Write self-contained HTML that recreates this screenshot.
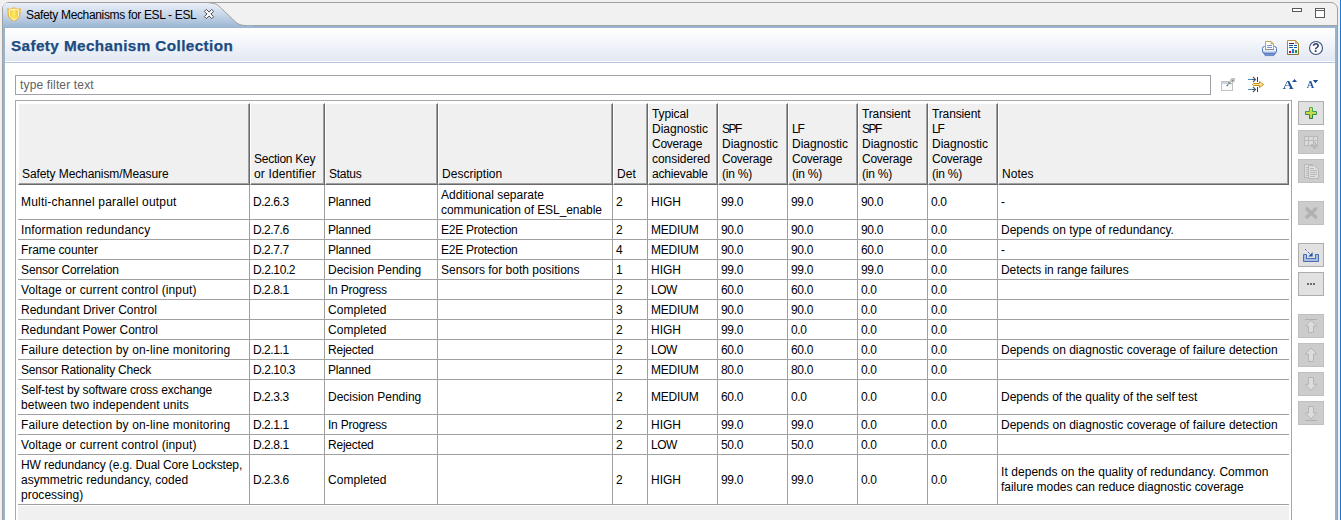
<!DOCTYPE html>
<html><head><meta charset="utf-8"><title>Safety Mechanisms for ESL - ESL</title>
<style>
html,body{margin:0;padding:0}
body{width:1341px;height:520px;overflow:hidden;background:#f0f0f0;position:relative;font-family:"Liberation Sans",sans-serif;font-size:12px;line-height:15px;color:#000}
div,svg,span{box-sizing:border-box}
.abs,.hc,.c,.rl,.cl,.empty,.btn,.ic{position:absolute}
#frame{position:absolute;left:2px;top:2px;width:1336px;height:540px;border:1px solid #a0a0a0;border-radius:7px 7px 0 0;background:#f1f1f1}
#edge{position:absolute;left:1340px;top:0;width:1px;height:520px;background:#1979d6}
#blueL{left:3px;top:26px;width:2px;height:500px;background:#99b4d1}
#blueR{left:1335px;top:26px;width:2px;height:500px;background:#99b4d1}
#blueT{left:3px;top:26px;width:1334px;height:2px;background:#99b4d1}
#grayT{left:240px;top:25px;width:1097px;height:1px;background:#a0a0a0}
#white{left:5px;top:28px;width:1330px;height:500px;background:#fff}
#band{left:5px;top:28px;width:1330px;height:33px;background:linear-gradient(#ffffff 0%,#fdfdfe 12%,#e2e8f3 100%)}
#bandl{left:5px;top:62px;width:1330px;height:1px;background:#b3c6e0}
#title{left:11px;top:36.2px;font-size:15.3px;font-weight:bold;color:#1c4b80;line-height:20px;white-space:nowrap;letter-spacing:0.39px;-webkit-text-stroke:0.25px #1c4b80}
#tabtxt{left:26px;top:8px;white-space:nowrap;line-height:15px}
#filter{left:15px;top:75px;width:1196px;height:20px;border:1px solid #a0a1a9;background:#fff}
#ftxt{left:20px;top:78px;color:#626262;white-space:nowrap}
#tbl{left:15px;top:100px;width:1277px;height:440px;border:1px solid #a6a7af;background:#fff}
.hc{top:103px;height:82px;background:#f0f0f0;border-left:1px solid #fff;border-top:1px solid #fff;border-right:1px solid #696969;border-bottom:1px solid #696969;box-shadow:inset -1px -1px 0 #a0a0a0}
.ht{position:absolute;left:3px;bottom:2px;white-space:nowrap}
.c{white-space:nowrap}
.rl{left:18px;width:1271px;height:1px;background:#a0a0a0}
.cl{width:1px;background:#a0a0a0}
.empty{left:18px;width:1271px;height:40px;background:#f0f0f0}
.btn{left:1298px;width:26px;height:24px;border:1px solid #adadad;background:#e1e1e1}
.btn.dis{border-color:#bfbfbf;background:#cccccc}
</style></head><body>
<div id="frame"></div>
<div id="edge"></div>
<div class="abs" id="grayT"></div>
<div class="abs" id="blueT"></div>
<div class="abs" id="blueL"></div>
<div class="abs" id="blueR"></div>
<div class="abs" id="white"></div>
<div class="abs" id="band"></div>
<div class="abs" id="bandl"></div>
<svg class="abs" id="tab" style="left:3px;top:3px" width="250" height="25" viewBox="0 0 250 25">
<defs><linearGradient id="tg" x1="0" y1="0" x2="0" y2="1"><stop offset="0" stop-color="#ebf0f8"/><stop offset="0.45" stop-color="#c9d7ea"/><stop offset="1" stop-color="#99b4d1"/></linearGradient></defs>
<path d="M0,25 L0,5 Q0,0 5,0 L206.5,0 C214,0 216,3 220,7 L229.3,15.8 C233,19.5 235.5,22.5 243,22.5 L250,22.5 L250,25 Z" fill="url(#tg)"/>
<path d="M206.5,0 C214,0 216,3 220,7 L229.3,15.8 C233,19.5 235.5,22.5 243,22.5" fill="none" stroke="#a0a0a0" stroke-width="1"/>
</svg>
<div class="abs" id="tabtxt"><span style="letter-spacing:-0.34px">Safety Mechanisms for ESL - ESL</span></div>
<div class="abs" id="title">Safety Mechanism Collection</div>
<div class="abs" id="filter"></div>
<div class="abs" id="ftxt"><span style="letter-spacing:0.15px">type filter text</span></div>
<div class="abs" id="tbl"></div>

<div class="hc" style="left:18px;width:232px"><div class="ht"><span style="letter-spacing:-0.09px">Safety Mechanism/Measure</span></div></div>
<div class="hc" style="left:250px;width:75px"><div class="ht"><span style="letter-spacing:-0.25px">Section Key</span><br><span style="letter-spacing:0.14px">or Identifier</span></div></div>
<div class="hc" style="left:325px;width:113px"><div class="ht"><span style="letter-spacing:-0.26px">Status</span></div></div>
<div class="hc" style="left:438px;width:175px"><div class="ht"><span style="letter-spacing:0.02px">Description</span></div></div>
<div class="hc" style="left:613px;width:35px"><div class="ht"><span style="letter-spacing:0.02px">Det</span></div></div>
<div class="hc" style="left:648px;width:70px"><div class="ht"><span style="letter-spacing:-0.11px">Typical</span><br><span style="letter-spacing:-0.01px">Diagnostic</span><br><span style="letter-spacing:-0.24px">Coverage</span><br><span style="letter-spacing:-0.05px">considered</span><br><span style="letter-spacing:-0.17px">achievable</span></div></div>
<div class="hc" style="left:718px;width:70px"><div class="ht"><span style="letter-spacing:-1.47px">SPF</span><br><span style="letter-spacing:-0.01px">Diagnostic</span><br><span style="letter-spacing:-0.24px">Coverage</span><br><span style="letter-spacing:-0.22px">(in %)</span></div></div>
<div class="hc" style="left:788px;width:70px"><div class="ht"><span style="letter-spacing:-1.26px">LF</span><br><span style="letter-spacing:-0.01px">Diagnostic</span><br><span style="letter-spacing:-0.24px">Coverage</span><br><span style="letter-spacing:-0.22px">(in %)</span></div></div>
<div class="hc" style="left:858px;width:70px"><div class="ht"><span style="letter-spacing:-0.13px">Transient</span><br><span style="letter-spacing:-1.47px">SPF</span><br><span style="letter-spacing:-0.01px">Diagnostic</span><br><span style="letter-spacing:-0.24px">Coverage</span><br><span style="letter-spacing:-0.22px">(in %)</span></div></div>
<div class="hc" style="left:928px;width:70px"><div class="ht"><span style="letter-spacing:-0.13px">Transient</span><br><span style="letter-spacing:-1.26px">LF</span><br><span style="letter-spacing:-0.01px">Diagnostic</span><br><span style="letter-spacing:-0.24px">Coverage</span><br><span style="letter-spacing:-0.22px">(in %)</span></div></div>
<div class="hc" style="left:998px;width:291px"><div class="ht"><span style="letter-spacing:0.02px">Notes</span></div></div>
<div class="c" style="left:21px;top:195px"><span style="letter-spacing:0.19px">Multi-channel parallel output</span></div>
<div class="c" style="left:253px;top:195px"><span style="letter-spacing:-0.44px">D.2.6.3</span></div>
<div class="c" style="left:328px;top:195px"><span style="letter-spacing:-0.2px">Planned</span></div>
<div class="c" style="left:441px;top:188px"><span style="letter-spacing:0.01px">Additional separate</span><br><span style="letter-spacing:-0.07px">communication of ESL_enable</span></div>
<div class="c" style="left:616px;top:195px"><span style="letter-spacing:-0.22px">2</span></div>
<div class="c" style="left:651px;top:195px"><span style="letter-spacing:-0.01px">HIGH</span></div>
<div class="c" style="left:721px;top:195px"><span style="letter-spacing:-0.34px">99.0</span></div>
<div class="c" style="left:791px;top:195px"><span style="letter-spacing:-0.34px">99.0</span></div>
<div class="c" style="left:861px;top:195px"><span style="letter-spacing:-0.34px">90.0</span></div>
<div class="c" style="left:931px;top:195px"><span style="letter-spacing:-0.38px">0.0</span></div>
<div class="c" style="left:1001px;top:195px"><span style="letter-spacing:0.8px">-</span></div>
<div class="rl" style="top:219px"></div>
<div class="c" style="left:21px;top:223px"><span style="letter-spacing:0.15px">Information redundancy</span></div>
<div class="c" style="left:253px;top:223px"><span style="letter-spacing:-0.44px">D.2.7.6</span></div>
<div class="c" style="left:328px;top:223px"><span style="letter-spacing:-0.2px">Planned</span></div>
<div class="c" style="left:441px;top:223px"><span style="letter-spacing:-0.25px">E2E Protection</span></div>
<div class="c" style="left:616px;top:223px"><span style="letter-spacing:-0.22px">2</span></div>
<div class="c" style="left:651px;top:223px"><span style="letter-spacing:-0.2px">MEDIUM</span></div>
<div class="c" style="left:721px;top:223px"><span style="letter-spacing:-0.34px">90.0</span></div>
<div class="c" style="left:791px;top:223px"><span style="letter-spacing:-0.34px">90.0</span></div>
<div class="c" style="left:861px;top:223px"><span style="letter-spacing:-0.34px">90.0</span></div>
<div class="c" style="left:931px;top:223px"><span style="letter-spacing:-0.38px">0.0</span></div>
<div class="c" style="left:1001px;top:223px"><span style="letter-spacing:0.01px">Depends on type of redundancy.</span></div>
<div class="rl" style="top:239px"></div>
<div class="c" style="left:21px;top:243px"><span style="letter-spacing:-0.09px">Frame counter</span></div>
<div class="c" style="left:253px;top:243px"><span style="letter-spacing:-0.44px">D.2.7.7</span></div>
<div class="c" style="left:328px;top:243px"><span style="letter-spacing:-0.2px">Planned</span></div>
<div class="c" style="left:441px;top:243px"><span style="letter-spacing:-0.25px">E2E Protection</span></div>
<div class="c" style="left:616px;top:243px"><span style="letter-spacing:-0.22px">4</span></div>
<div class="c" style="left:651px;top:243px"><span style="letter-spacing:-0.2px">MEDIUM</span></div>
<div class="c" style="left:721px;top:243px"><span style="letter-spacing:-0.34px">90.0</span></div>
<div class="c" style="left:791px;top:243px"><span style="letter-spacing:-0.34px">90.0</span></div>
<div class="c" style="left:861px;top:243px"><span style="letter-spacing:-0.34px">60.0</span></div>
<div class="c" style="left:931px;top:243px"><span style="letter-spacing:-0.38px">0.0</span></div>
<div class="c" style="left:1001px;top:243px"><span style="letter-spacing:0.8px">-</span></div>
<div class="rl" style="top:259px"></div>
<div class="c" style="left:21px;top:263px"><span style="letter-spacing:-0.12px">Sensor Correlation</span></div>
<div class="c" style="left:253px;top:263px"><span style="letter-spacing:-0.41px">D.2.10.2</span></div>
<div class="c" style="left:328px;top:263px"><span style="letter-spacing:-0.01px">Decision Pending</span></div>
<div class="c" style="left:441px;top:263px"><span style="letter-spacing:-0.01px">Sensors for both positions</span></div>
<div class="c" style="left:616px;top:263px"><span style="letter-spacing:-0.22px">1</span></div>
<div class="c" style="left:651px;top:263px"><span style="letter-spacing:-0.01px">HIGH</span></div>
<div class="c" style="left:721px;top:263px"><span style="letter-spacing:-0.34px">99.0</span></div>
<div class="c" style="left:791px;top:263px"><span style="letter-spacing:-0.34px">99.0</span></div>
<div class="c" style="left:861px;top:263px"><span style="letter-spacing:-0.34px">99.0</span></div>
<div class="c" style="left:931px;top:263px"><span style="letter-spacing:-0.38px">0.0</span></div>
<div class="c" style="left:1001px;top:263px"><span style="letter-spacing:-0.07px">Detects in range failures</span></div>
<div class="rl" style="top:279px"></div>
<div class="c" style="left:21px;top:283px"><span style="letter-spacing:0.12px">Voltage or current control (input)</span></div>
<div class="c" style="left:253px;top:283px"><span style="letter-spacing:-0.44px">D.2.8.1</span></div>
<div class="c" style="left:328px;top:283px"><span style="letter-spacing:-0.23px">In Progress</span></div>
<div class="c" style="left:616px;top:283px"><span style="letter-spacing:-0.22px">2</span></div>
<div class="c" style="left:651px;top:283px"><span style="letter-spacing:-0.48px">LOW</span></div>
<div class="c" style="left:721px;top:283px"><span style="letter-spacing:-0.34px">60.0</span></div>
<div class="c" style="left:791px;top:283px"><span style="letter-spacing:-0.34px">60.0</span></div>
<div class="c" style="left:861px;top:283px"><span style="letter-spacing:-0.38px">0.0</span></div>
<div class="c" style="left:931px;top:283px"><span style="letter-spacing:-0.38px">0.0</span></div>
<div class="rl" style="top:299px"></div>
<div class="c" style="left:21px;top:303px"><span style="letter-spacing:-0.01px">Redundant Driver Control</span></div>
<div class="c" style="left:328px;top:303px"><span style="letter-spacing:0.06px">Completed</span></div>
<div class="c" style="left:616px;top:303px"><span style="letter-spacing:-0.22px">3</span></div>
<div class="c" style="left:651px;top:303px"><span style="letter-spacing:-0.2px">MEDIUM</span></div>
<div class="c" style="left:721px;top:303px"><span style="letter-spacing:-0.34px">90.0</span></div>
<div class="c" style="left:791px;top:303px"><span style="letter-spacing:-0.34px">90.0</span></div>
<div class="c" style="left:861px;top:303px"><span style="letter-spacing:-0.38px">0.0</span></div>
<div class="c" style="left:931px;top:303px"><span style="letter-spacing:-0.38px">0.0</span></div>
<div class="rl" style="top:319px"></div>
<div class="c" style="left:21px;top:323px"><span style="letter-spacing:-0.05px">Redundant Power Control</span></div>
<div class="c" style="left:328px;top:323px"><span style="letter-spacing:0.06px">Completed</span></div>
<div class="c" style="left:616px;top:323px"><span style="letter-spacing:-0.22px">2</span></div>
<div class="c" style="left:651px;top:323px"><span style="letter-spacing:-0.01px">HIGH</span></div>
<div class="c" style="left:721px;top:323px"><span style="letter-spacing:-0.34px">99.0</span></div>
<div class="c" style="left:791px;top:323px"><span style="letter-spacing:-0.38px">0.0</span></div>
<div class="c" style="left:861px;top:323px"><span style="letter-spacing:-0.38px">0.0</span></div>
<div class="c" style="left:931px;top:323px"><span style="letter-spacing:-0.38px">0.0</span></div>
<div class="rl" style="top:339px"></div>
<div class="c" style="left:21px;top:343px"><span style="letter-spacing:0.15px">Failure detection by on-line monitoring</span></div>
<div class="c" style="left:253px;top:343px"><span style="letter-spacing:-0.44px">D.2.1.1</span></div>
<div class="c" style="left:328px;top:343px"><span style="letter-spacing:-0.23px">Rejected</span></div>
<div class="c" style="left:616px;top:343px"><span style="letter-spacing:-0.22px">2</span></div>
<div class="c" style="left:651px;top:343px"><span style="letter-spacing:-0.48px">LOW</span></div>
<div class="c" style="left:721px;top:343px"><span style="letter-spacing:-0.34px">60.0</span></div>
<div class="c" style="left:791px;top:343px"><span style="letter-spacing:-0.34px">60.0</span></div>
<div class="c" style="left:861px;top:343px"><span style="letter-spacing:-0.38px">0.0</span></div>
<div class="c" style="left:931px;top:343px"><span style="letter-spacing:-0.38px">0.0</span></div>
<div class="c" style="left:1001px;top:343px"><span style="letter-spacing:0.01px">Depends on diagnostic coverage of failure detection</span></div>
<div class="rl" style="top:359px"></div>
<div class="c" style="left:21px;top:363px"><span style="letter-spacing:-0.19px">Sensor Rationality Check</span></div>
<div class="c" style="left:253px;top:363px"><span style="letter-spacing:-0.41px">D.2.10.3</span></div>
<div class="c" style="left:328px;top:363px"><span style="letter-spacing:-0.2px">Planned</span></div>
<div class="c" style="left:616px;top:363px"><span style="letter-spacing:-0.22px">2</span></div>
<div class="c" style="left:651px;top:363px"><span style="letter-spacing:-0.2px">MEDIUM</span></div>
<div class="c" style="left:721px;top:363px"><span style="letter-spacing:-0.34px">80.0</span></div>
<div class="c" style="left:791px;top:363px"><span style="letter-spacing:-0.34px">80.0</span></div>
<div class="c" style="left:861px;top:363px"><span style="letter-spacing:-0.38px">0.0</span></div>
<div class="c" style="left:931px;top:363px"><span style="letter-spacing:-0.38px">0.0</span></div>
<div class="rl" style="top:379px"></div>
<div class="c" style="left:21px;top:383px"><span style="letter-spacing:-0.14px">Self-test by software cross exchange</span><br><span style="letter-spacing:0.08px">between two independent units</span></div>
<div class="c" style="left:253px;top:390px"><span style="letter-spacing:-0.44px">D.2.3.3</span></div>
<div class="c" style="left:328px;top:390px"><span style="letter-spacing:-0.01px">Decision Pending</span></div>
<div class="c" style="left:616px;top:390px"><span style="letter-spacing:-0.22px">2</span></div>
<div class="c" style="left:651px;top:390px"><span style="letter-spacing:-0.2px">MEDIUM</span></div>
<div class="c" style="left:721px;top:390px"><span style="letter-spacing:-0.34px">60.0</span></div>
<div class="c" style="left:791px;top:390px"><span style="letter-spacing:-0.38px">0.0</span></div>
<div class="c" style="left:861px;top:390px"><span style="letter-spacing:-0.38px">0.0</span></div>
<div class="c" style="left:931px;top:390px"><span style="letter-spacing:-0.38px">0.0</span></div>
<div class="c" style="left:1001px;top:390px"><span style="letter-spacing:-0.03px">Depends of the quality of the self test</span></div>
<div class="rl" style="top:414px"></div>
<div class="c" style="left:21px;top:418px"><span style="letter-spacing:0.15px">Failure detection by on-line monitoring</span></div>
<div class="c" style="left:253px;top:418px"><span style="letter-spacing:-0.44px">D.2.1.1</span></div>
<div class="c" style="left:328px;top:418px"><span style="letter-spacing:-0.23px">In Progress</span></div>
<div class="c" style="left:616px;top:418px"><span style="letter-spacing:-0.22px">2</span></div>
<div class="c" style="left:651px;top:418px"><span style="letter-spacing:-0.01px">HIGH</span></div>
<div class="c" style="left:721px;top:418px"><span style="letter-spacing:-0.34px">99.0</span></div>
<div class="c" style="left:791px;top:418px"><span style="letter-spacing:-0.34px">99.0</span></div>
<div class="c" style="left:861px;top:418px"><span style="letter-spacing:-0.38px">0.0</span></div>
<div class="c" style="left:931px;top:418px"><span style="letter-spacing:-0.38px">0.0</span></div>
<div class="c" style="left:1001px;top:418px"><span style="letter-spacing:0.01px">Depends on diagnostic coverage of failure detection</span></div>
<div class="rl" style="top:434px"></div>
<div class="c" style="left:21px;top:438px"><span style="letter-spacing:0.12px">Voltage or current control (input)</span></div>
<div class="c" style="left:253px;top:438px"><span style="letter-spacing:-0.44px">D.2.8.1</span></div>
<div class="c" style="left:328px;top:438px"><span style="letter-spacing:-0.23px">Rejected</span></div>
<div class="c" style="left:616px;top:438px"><span style="letter-spacing:-0.22px">2</span></div>
<div class="c" style="left:651px;top:438px"><span style="letter-spacing:-0.48px">LOW</span></div>
<div class="c" style="left:721px;top:438px"><span style="letter-spacing:-0.34px">50.0</span></div>
<div class="c" style="left:791px;top:438px"><span style="letter-spacing:-0.34px">50.0</span></div>
<div class="c" style="left:861px;top:438px"><span style="letter-spacing:-0.38px">0.0</span></div>
<div class="c" style="left:931px;top:438px"><span style="letter-spacing:-0.38px">0.0</span></div>
<div class="rl" style="top:454px"></div>
<div class="c" style="left:21px;top:458px"><span style="letter-spacing:-0.11px">HW redundancy (e.g. Dual Core Lockstep,</span><br><span style="letter-spacing:0.05px">asymmetric redundancy, coded</span><br><span style="letter-spacing:0.01px">processing)</span></div>
<div class="c" style="left:253px;top:473px"><span style="letter-spacing:-0.44px">D.2.3.6</span></div>
<div class="c" style="left:328px;top:473px"><span style="letter-spacing:0.06px">Completed</span></div>
<div class="c" style="left:616px;top:473px"><span style="letter-spacing:-0.22px">2</span></div>
<div class="c" style="left:651px;top:473px"><span style="letter-spacing:-0.01px">HIGH</span></div>
<div class="c" style="left:721px;top:473px"><span style="letter-spacing:-0.34px">99.0</span></div>
<div class="c" style="left:791px;top:473px"><span style="letter-spacing:-0.34px">99.0</span></div>
<div class="c" style="left:861px;top:473px"><span style="letter-spacing:-0.38px">0.0</span></div>
<div class="c" style="left:931px;top:473px"><span style="letter-spacing:-0.38px">0.0</span></div>
<div class="c" style="left:1001px;top:465px"><span style="letter-spacing:0.06px">It depends on the quality of redundancy. Common</span><br><span style="letter-spacing:-0.05px">failure modes can reduce diagnostic coverage</span></div>
<div class="rl" style="top:504px"></div>
<div class="cl" style="left:249px;top:185px;height:320px"></div>
<div class="cl" style="left:324px;top:185px;height:320px"></div>
<div class="cl" style="left:437px;top:185px;height:320px"></div>
<div class="cl" style="left:612px;top:185px;height:320px"></div>
<div class="cl" style="left:647px;top:185px;height:320px"></div>
<div class="cl" style="left:717px;top:185px;height:320px"></div>
<div class="cl" style="left:787px;top:185px;height:320px"></div>
<div class="cl" style="left:857px;top:185px;height:320px"></div>
<div class="cl" style="left:927px;top:185px;height:320px"></div>
<div class="cl" style="left:997px;top:185px;height:320px"></div>
<div class="empty" style="top:506px"></div>
<div class="btn" style="top:101px"></div>
<div class="btn dis" style="top:130px"></div>
<div class="btn dis" style="top:159px"></div>
<div class="btn dis" style="top:201px"></div>
<div class="btn" style="top:243px"></div>
<div class="btn" style="top:272px"></div>
<div class="btn dis" style="top:314px"></div>
<div class="btn dis" style="top:343px"></div>
<div class="btn dis" style="top:372px"></div>
<div class="btn dis" style="top:401px"></div>
<svg class="abs" style="left:0;top:0;will-change:transform" width="1341" height="520" viewBox="0 0 1341 520">
<defs>
<linearGradient id="shg" x1="0" y1="0" x2="1" y2="0"><stop offset="0" stop-color="#f4cf58"/><stop offset="0.5" stop-color="#fbe64c"/><stop offset="1" stop-color="#f1c648"/></linearGradient>
<linearGradient id="prg" x1="0" y1="0" x2="0" y2="1"><stop offset="0" stop-color="#ffffff"/><stop offset="0.5" stop-color="#eef2fa"/><stop offset="1" stop-color="#a9bfe6"/></linearGradient>
<linearGradient id="rpg" x1="0" y1="0" x2="0" y2="1"><stop offset="0" stop-color="#ffffff"/><stop offset="0.6" stop-color="#ffffff"/><stop offset="1" stop-color="#d9ecf8"/></linearGradient>
<linearGradient id="rpb" x1="0" y1="0" x2="0" y2="1"><stop offset="0" stop-color="#b8923c"/><stop offset="1" stop-color="#8b7030"/></linearGradient>
<linearGradient id="plg" x1="0" y1="0" x2="0" y2="1"><stop offset="0" stop-color="#4fae5e"/><stop offset="1" stop-color="#1c7a3c"/></linearGradient>
<linearGradient id="plf" x1="0" y1="0" x2="0" y2="1"><stop offset="0" stop-color="#d8e356"/><stop offset="1" stop-color="#b9cf45"/></linearGradient>
<linearGradient id="oag" x1="0" y1="0" x2="0" y2="1"><stop offset="0" stop-color="#fffbe0"/><stop offset="1" stop-color="#fbd85a"/></linearGradient>
</defs>
<!-- shield -->
<g id="shield">
<path d="M7.2,8 L9.6,9 L14,7.2 L18.4,9 L20.8,8 L20.3,15 C19.8,18 16.5,20.4 14,21.6 C11.5,20.4 8.2,18 7.7,15 Z" fill="#efb22e"/>
<path d="M8.6,9.8 L14,8.5 L19.4,9.8 L19,15 C18.5,17.6 16.2,19.3 14,20.4 C11.8,19.3 9.5,17.6 9,15 Z" fill="#fffbe6"/>
<path d="M9.6,10.6 L14,9.6 L18.4,10.6 L18.1,14.9 C17.7,17 15.8,18.4 14,19.3 C12.2,18.4 10.3,17 9.9,14.9 Z" fill="url(#shg)"/>
<rect x="13.6" y="9.8" width="0.9" height="5" fill="#fff6c8" opacity="0.8"/>
</g>
<!-- tab close X -->
<path d="M204.4,11.3 L206.3,9.4 L209,12.1 L211.7,9.4 L213.6,11.3 L210.9,14 L213.6,16.7 L211.7,18.6 L209,15.9 L206.3,18.6 L204.4,16.7 L207.1,14 Z" fill="#fff" stroke="#4c4c4c" stroke-width="1" stroke-linejoin="round"/>
<!-- min / max -->
<rect x="1292.5" y="8.5" width="9" height="3" fill="#fff" stroke="#5a5a5a"/>
<rect x="1315.5" y="8.5" width="9" height="9" fill="#fff" stroke="#5a5a5a"/>
<rect x="1315" y="10" width="10" height="1" fill="#5a5a5a"/>
<!-- printer -->
<g id="printer">
<path d="M1264.5,46.5 L1274.5,46.5 Q1276.5,46.5 1276.5,48.5 L1276.5,51 Q1276.5,53.5 1274,53.5 L1265,53.5 Q1262.5,53.5 1262.5,51 L1262.5,48.5 Q1262.5,46.5 1264.5,46.5 Z" fill="url(#prg)" stroke="#4f76be"/>
<path d="M1263.8,53.2 L1275.2,53.2 L1273.8,55.6 L1265.2,55.6 Z" fill="#7393d2" stroke="#4f76be" stroke-width="0.8" stroke-linejoin="round"/>
<path d="M1265.5,49.5 L1265.5,41.5 L1271,41.5 L1273.5,44 L1273.5,49.5 Z" fill="#fbfcfe" stroke="#bfa35c"/>
<path d="M1265,49.5 L1274,49.5" stroke="#8d8d8d"/>
<path d="M1271,41.5 L1271,44 L1273.5,44 Z" fill="#d9b86a" stroke="#bfa35c" stroke-width="0.6"/>
<rect x="1267" y="45" width="5" height="1" fill="#7e93c6"/><rect x="1267" y="47" width="5" height="1" fill="#7e93c6"/>
</g>
<!-- report -->
<g id="report">
<path d="M1287.5,40.5 L1295.5,40.5 L1298.5,43.5 L1298.5,54.5 L1287.5,54.5 Z" fill="url(#rpg)" stroke="url(#rpb)"/>
<path d="M1295.5,40.5 L1295.5,43.5 L1298.5,43.5 Z" fill="#dcbf78" stroke="#b8923c" stroke-width="0.6"/>
<rect x="1289" y="43" width="5" height="1" fill="#4a2a3a"/>
<rect x="1289" y="45" width="4" height="1" fill="#1558a6"/><rect x="1294" y="45" width="3" height="1" fill="#1558a6"/>
<rect x="1289" y="47" width="4" height="1" fill="#1558a6"/><rect x="1294" y="47" width="3" height="1" fill="#1558a6"/>
<rect x="1289" y="51" width="2" height="2" fill="#e8003a"/>
<rect x="1292" y="49" width="2" height="4" fill="#0f7fd6"/>
<rect x="1295" y="50" width="2" height="3" fill="#1f9a40"/>
</g>
<!-- help -->
<g id="help">
<circle cx="1316" cy="48" r="6.5" fill="#f8fafd" stroke="#40527a" stroke-width="1.1"/>
<g opacity="0.99"><text x="1316" y="52.4" text-anchor="middle" font-family="Liberation Sans, sans-serif" font-weight="bold" font-size="12" fill="#2f4068">?</text></g>
</g>
<!-- pin (disabled) -->
<g id="pin">
<rect x="1221.5" y="81.5" width="11" height="9" fill="#fbfcfd" stroke="#c2c2c2"/>
<rect x="1222" y="82" width="8" height="2" fill="#c9d6e4"/>
<path d="M1228.6,86.4 L1230.8,88.4" stroke="#dfe3e8" stroke-width="0.8"/>
<path d="M1227.1,85.4 L1230,82.6" stroke="#8f9a94" stroke-width="1.1"/>
<path d="M1230,80.2 L1231.3,77.9 L1234.9,77.9 L1234.9,81.6 L1232.6,82.9 Z" fill="#bcc3b9"/>
<path d="M1228.4,82.2 L1229.6,83.6 L1230.6,82.8 L1231.6,84.2" fill="none" stroke="#58705a" stroke-width="1" opacity="0.85"/>
<rect x="1232" y="80" width="1" height="1" fill="#55785a"/>
<circle cx="1227.1" cy="85.5" r="0.7" fill="#555a6a"/>
</g>
<!-- collapse arrows -->
<g id="coll">
<rect x="1248" y="79" width="4" height="1" fill="#3b8fd0"/><rect x="1252" y="79" width="4" height="1" fill="#4a5a70"/>
<path d="M1253,77 L1255.5,79.5 L1253,82" fill="none" stroke="#4a5a70" stroke-width="1.1"/>
<rect x="1257" y="77" width="1" height="5" fill="#2d3f5f"/>
<rect x="1248" y="89" width="4" height="1" fill="#3b8fd0"/><rect x="1252" y="89" width="4" height="1" fill="#4a5a70"/>
<path d="M1253,87 L1255.5,89.5 L1253,92" fill="none" stroke="#4a5a70" stroke-width="1.1"/>
<rect x="1257" y="87" width="1" height="5" fill="#2d3f5f"/>
<path d="M1252.5,84.5 L1253.5,83.5 L1259.5,83.5 L1259.5,81.5 L1263.5,84.5 L1259.5,87.5 L1259.5,85.5 L1253.5,85.5 Z" fill="url(#oag)" stroke="#c98a12" stroke-width="1" stroke-linejoin="round"/>
</g>
<!-- font size -->
<g id="fonts" fill="#1f4f96" font-family="Liberation Serif, serif" font-weight="bold">
<text x="1282.8" y="88.9" font-size="13.3" textLength="10.8" lengthAdjust="spacingAndGlyphs">A</text>
<path d="M1292,81.9 L1294.5,79 L1297,81.9 Z"/>
<text x="1306.8" y="88" font-size="10.6" textLength="7.4" lengthAdjust="spacingAndGlyphs">A</text>
<path d="M1312.8,80 L1318.2,80 L1315.5,83.2 Z"/>
</g>
<!-- plus -->
<g id="plus">
<path d="M1309.5,107.5 L1312.5,107.5 L1312.5,111.5 L1316.5,111.5 L1316.5,114.5 L1312.5,114.5 L1312.5,118.5 L1309.5,118.5 L1309.5,114.5 L1305.5,114.5 L1305.5,111.5 L1309.5,111.5 Z" fill="url(#plf)" stroke="url(#plg)" stroke-width="1"/>
</g>
<!-- grid+ disabled -->
<g id="gridp">
<rect x="1304" y="136" width="14" height="10" fill="#b9b9b9"/>
<g fill="#dbdbdb"><rect x="1305" y="137" width="3" height="3"/><rect x="1309" y="137" width="4" height="3"/><rect x="1314" y="137" width="3" height="3"/>
<rect x="1305" y="141" width="3" height="4"/><rect x="1309" y="141" width="4" height="4"/><rect x="1314" y="141" width="3" height="4"/></g>
<path d="M1313,142 L1316,142 L1316,144 L1318,144 L1318,147 L1316,147 L1316,149 L1313,149 L1313,147 L1311,147 L1311,144 L1313,144 Z" fill="#b9b9b9"/>
<rect x="1314" y="143" width="1" height="2" fill="#d6d6d6"/>
</g>
<!-- copy disabled -->
<g id="copy">
<rect x="1304.5" y="164.5" width="8" height="13" fill="#dcdcdc" stroke="#b9b9b9"/>
<g fill="#b9b9b9"><rect x="1306" y="167" width="2" height="1"/><rect x="1306" y="169" width="2" height="1"/><rect x="1306" y="171" width="2" height="1"/><rect x="1306" y="173" width="2" height="1"/><rect x="1306" y="175" width="2" height="1"/></g>
<path d="M1308.5,165.5 L1314.5,165.5 L1318.5,169.5 L1318.5,178.5 L1308.5,178.5 Z" fill="#dedede" stroke="#b9b9b9"/>
<g fill="#b9b9b9"><rect x="1310" y="168" width="4" height="1"/><rect x="1310" y="170" width="7" height="1"/><rect x="1310" y="172" width="7" height="1"/><rect x="1310" y="174" width="7" height="1"/><rect x="1310" y="176" width="5" height="1"/></g>
</g>
<!-- X disabled -->
<path d="M1307,209 L1315.5,217 M1315.5,209 L1307,217" stroke="#b1b1b1" stroke-width="3.6" stroke-linecap="round" fill="none"/>
<!-- import -->
<g id="import">
<path d="M1303.5,254.5 L1306.5,254.5 L1306.5,258.5 L1315.5,258.5 L1315.5,254.5 L1318.5,254.5 L1318.5,261.5 L1303.5,261.5 Z" fill="#a9bce2" stroke="#4a6fb5"/>
<path d="M1306.5,254.5 L1306.5,258.5 L1315.5,258.5 L1315.5,254.5" fill="none" stroke="#4a6fb5"/>
<path d="M1305,249 L1310,254" stroke="#f4f4f4" stroke-width="2.4"/>
<path d="M1305,249 L1310.5,254.5" stroke="#2a2a90" stroke-width="1" stroke-dasharray="1.2 0.9"/>
<path d="M1312.6,252.2 L1312.6,256.6 L1308.2,256.6 Z" fill="#1a5aa8"/>
</g>
<!-- dots -->
<g fill="#6d6d6d"><rect x="1307" y="283" width="2" height="2"/><rect x="1310" y="283" width="2" height="2"/><rect x="1313" y="283" width="2" height="2"/></g>
<!-- arrows disabled -->
<g fill="#dcdcdc" stroke="#b5b5b5" stroke-width="1" stroke-linejoin="round">
<path d="M1311,320.5 L1316.8,326 L1313.5,326 L1313.5,332.5 L1308.5,332.5 L1308.5,326 L1305.2,326 Z"/>
<path d="M1311,348 L1316.8,354.2 L1313.5,354.2 L1313.5,361.5 L1308.5,361.5 L1308.5,354.2 L1305.2,354.2 Z"/>
<path d="M1311,390.5 L1316.8,384.3 L1313.5,384.3 L1313.5,377.5 L1308.5,377.5 L1308.5,384.3 L1305.2,384.3 Z"/>
<path d="M1311,419 L1316.8,413 L1313.5,413 L1313.5,406.5 L1308.5,406.5 L1308.5,413 L1305.2,413 Z"/>
</g>
<rect x="1305" y="319" width="12" height="1" fill="#b0b0b0"/>
<rect x="1305" y="420" width="12" height="1" fill="#b0b0b0"/>
</svg>
</body></html>
